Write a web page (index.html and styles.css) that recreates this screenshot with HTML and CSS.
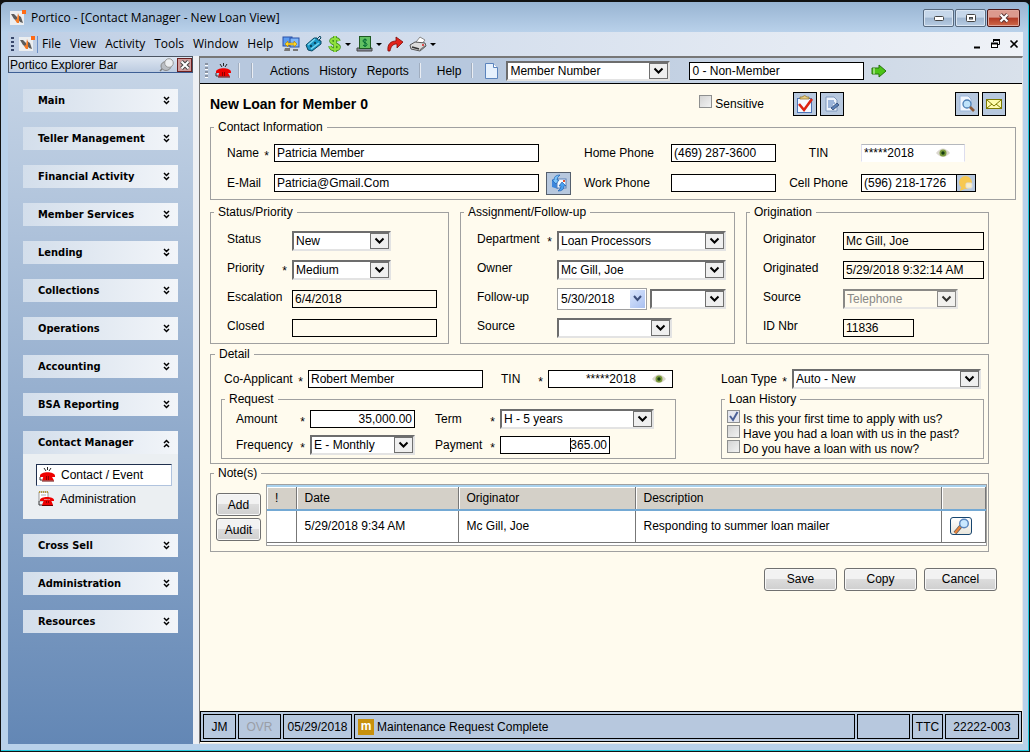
FILE: index.html
```html
<!DOCTYPE html>
<html lang="en">
<head>
    <meta charset="UTF-8">
    <meta name="viewport" content="width=device-width, initial-scale=1.0">
    <title>Portico - Contact Manager</title>
    <link rel="stylesheet" href="styles.css">
</head>
<body>
    <!-- Shared icons -->
    <svg class="defs" width="0" height="0" aria-hidden="true">
        <symbol id="logo" viewBox="0 0 16 16">
            <rect x="0" y="1" width="14" height="14" fill="#eceef0"/>
            <path d="M1 4l3 0 3 3v4l-3-2z" fill="#5c5c5c"/>
            <path d="M13 13l-3-1-2-3V5l3 2 1 3z" fill="#5c5c5c"/>
            <path d="M8 3l1 3 0 7-2 0-2-3 2-1z" fill="#f47a24"/>
            <rect x="12" y="0" width="4" height="4" fill="#ff6a13"/>
        </symbol>
        <symbol id="phone" viewBox="0 0 16 16">
            <path d="M5 1l2 3M8.500 0v3M12 1l-2 3" stroke="#222" fill="none"/>
            <path d="M1 9c0-5 15-5 15 0v1h-4V8.500H5V10H1z" fill="#ee0000"/>
            <path d="M5 8h7l3 5.500H3z" fill="#ee0000"/>
            <path d="M3 14h12" stroke="#600"/>
            <path d="M7 10h1M9 10h1M7 12h1M9 12h1" stroke="#300"/>
            <path d="M1 10v3h2" stroke="#333" fill="none"/>
        </symbol>
        <symbol id="eye" viewBox="0 0 14 10">
            <path d="M0 5q7-9 14 0q-7 8-14 0z" fill="#dcd8cf"/>
            <circle cx="7" cy="5" r="3.500" fill="#7a9b3c"/>
            <circle cx="7" cy="5" r="1.700" fill="#163d12"/>
        </symbol>
        <symbol id="down" viewBox="0 0 7 10">
            <path d="M1 1l2.500 2.500L6 1M1 5l2.500 2.500L6 5" fill="none" stroke="#000" stroke-width="1.500"/>
        </symbol>
    </svg>

    <div class="window">
        <header class="titlebar">
            <svg class="icon"><use href="#logo"/></svg>
            <span class="title">Portico - [Contact Manager - New Loan View]</span>
            <div class="window-buttons">
                <button aria-label="Minimize"><svg width="10" height="5"><rect x=".5" y=".5" width="9" height="4" rx="1" fill="#fff" stroke="#444"/></svg></button>
                <button aria-label="Restore"><svg width="10" height="8"><rect x=".5" y=".5" width="9" height="7" rx="1" fill="#fff" stroke="#444"/><rect x="3.500" y="3.500" width="3" height="1.500" fill="#9ab" stroke="#444"/></svg></button>
                <button class="close" aria-label="Close"><svg width="12" height="10"><path d="M2.500 1.500l7 7M9.500 1.500l-7 7" stroke="#533" stroke-width="4"/><path d="M2.500 1.500l7 7M9.500 1.500l-7 7" stroke="#fff" stroke-width="2.200"/></svg></button>
            </div>
        </header>

        <nav class="menubar">
            <span class="grip"></span>
            <svg class="icon"><use href="#logo"/></svg>
            <span class="menu-sep"></span>
            <button>File</button>
            <button>View</button>
            <button>Activity</button>
            <button>Tools</button>
            <button>Window</button>
            <button>Help</button>
            <div class="menu-tools">
                <button aria-label="Transfer"><svg width="18" height="16" viewBox="0 0 18 16"><rect x="1" y="1" width="9" height="9" fill="#5c9bf0" stroke="#2850a8"/><rect x="8" y="2" width="9" height="9" fill="#7fb6f8" stroke="#2850a8"/><path d="M3 12h5v3H2zM11 13h5v2h-5z" fill="#777"/><path d="M3 8l3-3v2h6V5l3 3-3 3V9H6v2z" fill="#ffd728" stroke="#a87a00" stroke-width=".6"/></svg></button>
                <button aria-label="Tag"><svg width="18" height="16" viewBox="0 0 18 16"><path d="M1 9l8-7 3 0 1 2 3 1 0 3-9 7-4-1z" fill="#1c96c4" stroke="#0b4862"/><path d="M3 9l7-6M6 13l8-6" stroke="#7ad8f2" stroke-width="1.500"/><circle cx="6" cy="10" r="1.200" fill="#0b4862"/><circle cx="10" cy="7" r="1.200" fill="#0b4862"/><path d="M12 3l3-3 1 2-2 2" fill="none" stroke="#0b4862"/></svg></button>
                <button class="drop" aria-label="Money"><svg width="14" height="16" viewBox="0 0 14 16"><path d="M11 5C10 2 3 2 3 5s8 3 8 6-8 4-9-1M7 0v16" fill="none" stroke="#3c8a1a" stroke-width="3.600"/><path d="M11 5C10 2 3 2 3 5s8 3 8 6-8 4-9-1M7 0v16" fill="none" stroke="#8fe03c" stroke-width="2.200"/></svg></button>
                <button class="drop" aria-label="Cash"><svg width="17" height="16" viewBox="0 0 17 16"><path d="M1 12h15v3H1z" fill="#889" stroke="#444"/><rect x="3.500" y=".5" width="11" height="12" fill="#62c062" stroke="#1e5a22"/><path d="M11 4.500C10 3 7 3 7 5s4 1.500 4 3.500-3 2-4 .5M9 2.500v8.500" fill="none" stroke="#063"/></svg></button>
                <button aria-label="Forward"><svg width="17" height="16" viewBox="0 0 17 16"><path d="M1 15C0 8 4 5 9 5V1l7 5-6 6V8C6 8 4 10 3 15z" fill="#e3231b" stroke="#7d0b07" stroke-width=".8"/></svg></button>
                <button class="drop" aria-label="Print"><svg width="18" height="16" viewBox="0 0 18 16"><path d="M7 6l4-5 5 3-4 5z" fill="#fff" stroke="#888"/><path d="M1 9l5-3 10 1 1 3-6 5-9-2z" fill="#dcdcdc" stroke="#555"/><path d="M3 11l7 2" stroke="#333" stroke-width="1.600"/><path d="M11 14l5-4" stroke="#777" stroke-width="1.500"/><circle cx="14" cy="9" r="1" fill="#d22"/></svg></button>
            </div>
            <div class="mdi-buttons">
                <button aria-label="Minimize child"><svg width="10" height="10"><path d="M1 8.500h6" stroke="#000" stroke-width="2"/></svg></button>
                <button aria-label="Restore child"><svg width="10" height="10"><path d="M2.500 3V1.500h6v4H7" fill="none" stroke="#000"/><path d="M2 1h7" stroke="#000" stroke-width="2"/><rect x=".5" y="4.500" width="6" height="4" fill="#fff" stroke="#000"/><path d="M0 4.500h7" stroke="#000" stroke-width="2"/></svg></button>
                <button aria-label="Close child"><svg width="10" height="10"><path d="M1.500 1.500l7 7M8.500 1.500l-7 7" stroke="#000" stroke-width="1.600"/></svg></button>
            </div>
        </nav>

        <div class="workspace">
            <aside class="explorer">
                <div class="explorer-head">
                    <span>Portico Explorer Bar</span>
                    <svg width="16" height="14" viewBox="0 0 16 14"><path d="M5 9l-4 4" stroke="#777" stroke-width="1.500"/><ellipse cx="7" cy="8" rx="5" ry="4.500" fill="#b9bdc3" stroke="#888"/><circle cx="10" cy="5" r="4.300" fill="#eceef0" stroke="#999"/></svg>
                    <button class="explorer-close" aria-label="Close explorer"><svg width="10" height="10"><path d="M1.500 1.500l7 7M8.500 1.500l-7 7" stroke="#444" stroke-width="4"/><path d="M1.500 1.500l7 7M8.500 1.500l-7 7" stroke="#fff" stroke-width="2"/></svg></button>
                </div>
                <div class="explorer-body">
                    <button class="group">Main<svg><use href="#down"/></svg></button>
                    <button class="group">Teller Management<svg><use href="#down"/></svg></button>
                    <button class="group">Financial Activity<svg><use href="#down"/></svg></button>
                    <button class="group">Member Services<svg><use href="#down"/></svg></button>
                    <button class="group">Lending<svg><use href="#down"/></svg></button>
                    <button class="group">Collections<svg><use href="#down"/></svg></button>
                    <button class="group">Operations<svg><use href="#down"/></svg></button>
                    <button class="group">Accounting<svg><use href="#down"/></svg></button>
                    <button class="group">BSA Reporting<svg><use href="#down"/></svg></button>
                    <div>
                        <button class="group open">Contact Manager<svg><use href="#down"/></svg></button>
                        <div class="group-items">
                            <a href="#" class="active"><svg class="icon"><use href="#phone"/></svg>Contact / Event</a>
                            <a href="#"><svg class="icon" viewBox="0 0 16 16"><path d="M1 1h9v9H1z" fill="#fff" stroke="#999"/><path d="M1 1h10" stroke="#b89a3a" stroke-width="2" stroke-dasharray="1 1"/><path d="M3 4h5" stroke="#aab"/><path d="M2 9c0-4 14-4 14 0v1h-4V8.500H6V10H2z" fill="#ee0000"/><path d="M6 9h7l2 5H4z" fill="#ee0000"/><path d="M4 14.500h11" stroke="#600"/><path d="M8 11h1M10 11h1" stroke="#300"/><path d="M1 10v4h3" stroke="#333" fill="none"/></svg>Administration</a>
                        </div>
                    </div>
                    <button class="group">Cross Sell<svg><use href="#down"/></svg></button>
                    <button class="group">Administration<svg><use href="#down"/></svg></button>
                    <button class="group">Resources<svg><use href="#down"/></svg></button>
                </div>
            </aside>

            <main class="main">
                <div class="toolbar">
                    <span class="grip light"></span>
                    <button class="tool-phone" aria-label="New contact"><svg class="icon"><use href="#phone"/></svg></button>
                    <span class="tool-sep"></span>
                    <span class="tool-sep"></span>
                    <div class="tool-menu">
                        <button>Actions</button>
                        <button>History</button>
                        <button>Reports</button>
                    </div>
                    <span class="tool-sep"></span>
                    <button class="tool-help">Help</button>
                    <span class="tool-sep"></span>
                    <button class="tool-page" aria-label="New"><svg width="13" height="16" viewBox="0 0 13 16"><path d="M.5.500h8l4 4v11H.5z" fill="#e6f1fd" stroke="#5b84bd"/><path d="M8.500.500v4h4" fill="#fff" stroke="#5b84bd"/></svg></button>
                    <select class="member-type" aria-label="Search by"><option>Member Number</option></select>
                    <input class="member-value" type="text" aria-label="Member" value="0 - Non-Member">
                    <button aria-label="Go"><svg width="16" height="14" viewBox="0 0 16 14"><path d="M1 4h7V1l7 6-7 6v-3H1z" fill="#4cc417" stroke="#26750b"/><path d="M3 4v6" stroke="#dff5d2"/></svg></button>
                </div>

                <form class="form">
                    <div class="form-head">
                        <h1>New Loan for Member 0</h1>
                        <label class="check"><input type="checkbox">Sensitive</label>
                        <div class="icon-buttons">
                            <button type="button" aria-label="Tasks"><svg width="20" height="20" viewBox="0 0 20 20"><rect x="2.500" y="4.500" width="14" height="14" fill="#f6f9ff" stroke="#4d74b8"/><path d="M5 5h9V3h-2q-2-3-5 0H5z" fill="#e8cf86" stroke="#8a6a1c" stroke-width=".7"/><path d="M4 10l5 6 8-11" fill="none" stroke="#dd2211" stroke-width="2.600"/></svg></button>
                            <button type="button" aria-label="Edit"><svg width="18" height="18" viewBox="0 0 18 18"><path d="M3 2h8l3 3v11H3z" fill="#eef4fc" stroke="#7f98bd"/><path d="M5 6h6M5 8h7M5 10h5M5 12h4" stroke="#4a76b8"/><path d="M8 13l6-5 2 2-6 5z" fill="#5a80b5" stroke="#223a66" stroke-width=".7"/></svg></button>
                        </div>
                        <div class="icon-buttons preview">
                            <button type="button" aria-label="Preview"><svg width="18" height="18" viewBox="0 0 18 18"><path d="M2 1h8l3 3v12H2z" fill="#f2f7fe" stroke="#9bb7dc"/><circle cx="9" cy="9" r="4" fill="#bfe3fa" stroke="#4d7fb5" stroke-width="1.300"/><path d="M12 12l4 4" stroke="#8a5a3a" stroke-width="2.600"/></svg></button>
                            <button type="button" aria-label="Mail"><svg width="16" height="12" viewBox="0 0 16 12"><rect x=".5" y="1.500" width="15" height="9" fill="#fffcae" stroke="#7d7a00"/><path d="M1 2l7 6 7-6M1 10l5-4M15 10l-5-4" fill="none" stroke="#7d7a00"/></svg></button>
                        </div>
                    </div>

                    <fieldset>
                        <legend>Contact Information</legend>
                        <div class="contact-grid">
                            <label for="name">Name<span class="star">*</span></label>
                            <input id="name" type="text" value="Patricia Member">
                            <span></span>
                            <label for="home">Home Phone</label>
                            <input id="home" type="text" value="(469) 287-3600">
                            <label class="centered" for="tin">TIN</label>
                            <div class="masked soft">
                                <input id="tin" type="text" value="*****2018">
                                <svg class="eye"><use href="#eye"/></svg>
                            </div>

                            <label for="email">E-Mail</label>
                            <input id="email" type="text" value="Patricia@Gmail.Com">
                            <button type="button" class="mail-button" aria-label="Send e-mail"><svg width="18" height="18" viewBox="0 0 18 18"><path d="M2 6l6-2v11l-6-2z" fill="#3c86dc"/><rect x="7" y="5" width="9" height="9" fill="#f7fbff" stroke="#5b7fb5"/><rect x="13" y="6" width="2" height="2" fill="#e0522c"/><path d="M10 1Q4 1 4 6H2l4 4 3-4H7q0-3 3-5z" fill="#7cc4fa" stroke="#1c5fb0" stroke-width=".7"/><path d="M8 17q6 0 6-5h2l-4-4-3 4h2q0 3-3 5z" fill="#4aa0f0" stroke="#1c5fb0" stroke-width=".7"/></svg></button>
                            <label for="work">Work Phone</label>
                            <input id="work" type="text">
                            <label class="centered" for="cell">Cell Phone</label>
                            <div class="cell-field">
                                <input id="cell" type="text" value="(596) 218-1726">
                                <button type="button" aria-label="Text message"><svg width="16" height="16" viewBox="0 0 16 16"><circle cx="7.500" cy="7.500" r="6.500" fill="#f7c850"/><path d="M3 12l-1 4 5-2z" fill="#f7c850"/><rect x="8" y="8" width="6" height="5" rx="1" fill="#fbeec4" stroke="#ddd"/></svg></button>
                            </div>
                        </div>
                    </fieldset>

                    <div class="sections">
                        <div class="trio">
                            <fieldset>
                                <legend>Status/Priority</legend>
                                <div class="rows status">
                                    <label for="status">Status</label>
                                    <select id="status"><option>New</option></select>
                                    <label for="priority">Priority<span class="star">*</span></label>
                                    <select id="priority"><option>Medium</option></select>
                                    <label for="escalation">Escalation</label>
                                    <input id="escalation" type="text" value="6/4/2018" readonly>
                                    <label for="closed">Closed</label>
                                    <input id="closed" type="text" readonly>
                                </div>
                            </fieldset>

                            <fieldset>
                                <legend>Assignment/Follow-up</legend>
                                <div class="rows assignment">
                                    <label for="department">Department<span class="star">*</span></label>
                                    <select id="department"><option>Loan Processors</option></select>
                                    <label for="owner">Owner</label>
                                    <select id="owner"><option>Mc Gill, Joe</option></select>
                                    <label for="followup">Follow-up</label>
                                    <div class="followup">
                                        <div class="date-field">
                                            <input id="followup" type="text" value="5/30/2018">
                                            <button type="button" aria-label="Pick date"><svg width="9" height="7"><path d="M1 1l3.500 4L8 1" fill="none" stroke="#3c4f7c" stroke-width="2"/></svg></button>
                                        </div>
                                        <select aria-label="Follow-up time"><option></option></select>
                                    </div>
                                    <label for="source">Source</label>
                                    <select id="source" class="source"><option></option></select>
                                </div>
                            </fieldset>

                            <fieldset>
                                <legend>Origination</legend>
                                <div class="rows origination">
                                    <label for="originator">Originator</label>
                                    <input id="originator" type="text" value="Mc Gill, Joe" readonly>
                                    <label for="originated">Originated</label>
                                    <input id="originated" type="text" value="5/29/2018 9:32:14 AM" readonly>
                                    <label for="origin-source">Source</label>
                                    <select id="origin-source" disabled><option>Telephone</option></select>
                                    <label for="id-nbr">ID Nbr</label>
                                    <input id="id-nbr" class="id-nbr" type="text" value="11836" readonly>
                                </div>
                            </fieldset>
                        </div>

                        <fieldset class="detail">
                            <legend>Detail</legend>
                            <div class="detail-grid">
                                <div class="applicant">
                                    <label for="coapplicant">Co-Applicant<span class="star">*</span></label>
                                    <input id="coapplicant" type="text" value="Robert Member">
                                    <label class="co-tin" for="co-tin">TIN<span class="star">*</span></label>
                                    <div class="masked">
                                        <input id="co-tin" class="right" type="text" value="*****2018">
                                        <svg class="eye"><use href="#eye"/></svg>
                                    </div>
                                </div>
                                <div class="loan-type">
                                    <label for="loan-type">Loan Type<span class="star">*</span></label>
                                    <select id="loan-type"><option>Auto - New</option></select>
                                </div>

                                <fieldset>
                                    <legend>Request</legend>
                                    <div class="request">
                                        <label for="amount">Amount<span class="star">*</span></label>
                                        <input id="amount" class="right" type="text" value="35,000.00">
                                        <label for="term">Term<span class="star">*</span></label>
                                        <select id="term"><option>H - 5 years</option></select>
                                        <label for="frequency">Frequency<span class="star">*</span></label>
                                        <select id="frequency"><option>E - Monthly</option></select>
                                        <label for="payment">Payment<span class="star">*</span></label>
                                        <div class="payment">
                                            <input id="payment" class="right" type="text" value="365.00">
                                            <span class="caret"></span>
                                        </div>
                                    </div>
                                </fieldset>

                                <fieldset>
                                    <legend>Loan History</legend>
                                    <div class="history">
                                        <label class="check"><input type="checkbox" checked>Is this your first time to apply with us?</label>
                                        <label class="check"><input type="checkbox">Have you had a loan with us in the past?</label>
                                        <label class="check"><input type="checkbox">Do you have a loan with us now?</label>
                                    </div>
                                </fieldset>
                            </div>
                        </fieldset>

                        <fieldset class="notes">
                            <legend>Note(s)</legend>
                            <div class="notes-body">
                                <div class="notes-buttons">
                                    <button type="button" class="btn">Add</button>
                                    <button type="button" class="btn">Audit</button>
                                </div>
                                <div class="table-frame">
                                    <table>
                                        <thead>
                                            <tr>
                                                <th class="flag">!</th>
                                                <th class="date">Date</th>
                                                <th class="originator">Originator</th>
                                                <th>Description</th>
                                                <th class="view"></th>
                                            </tr>
                                        </thead>
                                        <tbody>
                                            <tr>
                                                <td></td>
                                                <td>5/29/2018 9:34 AM</td>
                                                <td>Mc Gill, Joe</td>
                                                <td>Responding to summer loan mailer</td>
                                                <td><button type="button" class="view-button" aria-label="View note"><svg width="18" height="16" viewBox="0 0 18 16"><path d="M9 8l-6 7" stroke="#555" stroke-width="3.600"/><path d="M8.500 8.500L3 15" stroke="#e8843c" stroke-width="2.400"/><circle cx="12" cy="5.500" r="4.300" fill="#c9e8ff" stroke="#5b86bd" stroke-width="1.400"/></svg></button></td>
                                            </tr>
                                        </tbody>
                                    </table>
                                </div>
                            </div>
                        </fieldset>
                    </div>

                    <div class="form-actions">
                        <button type="button" class="btn">Save</button>
                        <button type="button" class="btn">Copy</button>
                        <button type="button" class="btn">Cancel</button>
                    </div>
                </form>

                <footer class="statusbar">
                    <span class="user">JM</span>
                    <span class="ovr">OVR</span>
                    <span class="today">05/29/2018</span>
                    <span class="message"><i>m</i>Maintenance Request Complete</span>
                    <span class="blank"></span>
                    <span class="ttc">TTC</span>
                    <span class="number">22222-003</span>
                </footer>
            </main>
        </div>
    </div>
</body>
</html>
```
FILE: styles.css
```css
* {
    box-sizing: border-box;
}

body {
    margin: 0;
    background: #111;
    color: #000;
    font: 12px/14px "Liberation Sans", Arial, sans-serif;
}

button, input, select {
    margin: 0;
    padding: 0;
    border-radius: 0;
    color: #000;
    font: inherit;
}

button {
    border: none;
    background: none;
}

svg {
    display: block;
    flex: none;
}

a {
    color: #000;
    text-decoration: none;
}

.defs {
    position: absolute;
}

.icon {
    width: 16px;
    height: 16px;
}

/* Window frame */
.window {
    display: flex;
    flex-direction: column;
    min-height: 100vh;
    padding: 0 6px 7px 7px;
    border: 1px solid #111;
    border-top-width: 2px;
    border-radius: 6px 6px 0 0;
    background: linear-gradient(#98b4d2, #b9d1ea 30px, #b9d1ea);
    box-shadow: inset -1px -1px 0 #22c8dc;
}

.titlebar {
    display: flex;
    align-items: center;
    height: 30px;
    padding: 2px 3px 0 2px;
}

.title {
    flex: 1;
    padding-left: 5px;
    font-family: "Open Sans", sans-serif;
    font-size: 12px;
}

.window-buttons {
    display: flex;
    gap: 1px;
}

.window-buttons button {
    display: flex;
    align-items: center;
    justify-content: center;
    width: 31px;
    height: 18px;
    border: 1px solid #57697e;
    border-radius: 2px;
    background: linear-gradient(#c6d7ea 45%, #9fb6d0 50%, #b7cce3);
    box-shadow: inset 0 0 0 1px #d9e5f2;
}

.window-buttons .close {
    width: 33px;
    border-color: #4d1a1a;
    background: linear-gradient(#dc9a8e 45%, #b23a25 50%, #cf6a4a);
    box-shadow: inset 0 0 0 1px #e0a59a;
}

/* Menu bar */
.menubar {
    display: flex;
    align-items: center;
    height: 24px;
    padding: 0 4px 0 3px;
    background: linear-gradient(to right, #bfcfe5, #eff2f7);
}

.menubar > button {
    margin-right: 9px;
    font-family: "Open Sans", sans-serif;
    font-size: 12px;
}

.grip {
    width: 3px;
    height: 15px;
    margin-right: 5px;
    background: repeating-linear-gradient(#39486b 0 2px, transparent 2px 4px);
}

.grip.light {
    background: repeating-linear-gradient(#8a94a4 0 2px, #fff 2px 3px, transparent 3px 4px);
}

.menu-sep {
    width: 1px;
    height: 17px;
    margin: 0 4px 0 2px;
    background: #6d90c6;
}

.menu-tools {
    display: flex;
    flex: 1;
    align-items: center;
    gap: 5px;
}

.menu-tools button {
    display: flex;
    align-items: center;
    gap: 3px;
}

.menu-tools .drop::after {
    content: "";
    border: 3px solid transparent;
    border-top-color: #000;
    border-bottom: none;
}

.mdi-buttons {
    display: flex;
    gap: 8px;
}

/* Explorer bar */
.workspace {
    display: flex;
    flex: 1;
    background: #eef0f3;
}

.explorer {
    display: flex;
    flex: none;
    flex-direction: column;
    width: 185px;
    margin-right: 6px;
}

.explorer-head {
    display: flex;
    align-items: center;
    height: 17px;
    padding-left: 1px;
    border: 1px solid #4b5563;
    border-bottom-color: #3e5f94;
    background: linear-gradient(#dde6f1, #bccbe0);
}

.explorer-head span {
    flex: 1;
}

.explorer-close {
    display: flex;
    align-items: center;
    justify-content: center;
    width: 15px;
    height: 14px;
    margin-left: 2px;
    border: 1px solid #6b1f1f;
    background: #cf9c9c;
}

.explorer-body {
    display: flex;
    flex: 1;
    flex-direction: column;
    gap: 15px;
    padding: 16px 15px;
    background: linear-gradient(#c5d4e6, #6387b5);
}

.group {
    display: flex;
    align-items: center;
    justify-content: space-between;
    width: 100%;
    height: 23px;
    padding: 0 8px 0 15px;
    background: linear-gradient(to right, #d3deeb, #f2f5f9);
    font-family: "DejaVu Sans Condensed", sans-serif;
    font-size: 11px;
    font-weight: bold;
}

.group svg {
    width: 7px;
    height: 10px;
}

.group.open svg {
    transform: scaleY(-1);
}

.group-items {
    padding: 10px 6px 8px 13px;
    background: #ebeff2;
}

.group-items a {
    display: flex;
    align-items: center;
    gap: 6px;
    height: 25px;
    padding-left: 2px;
}

.group-items .active {
    height: 22px;
    border: 1px solid #1f2f4d;
    border-right-color: #b0c3de;
    border-bottom-color: #b0c3de;
    background: #fff;
}

/* Main area */
.main {
    display: flex;
    flex: 1;
    flex-direction: column;
    min-width: 0;
    padding-bottom: 1px;
    border: 1px solid #777;
    border-top-width: 2px;
    border-right-color: #e8e8e8;
    border-bottom-color: #e8e8e8;
    background: #fffbee;
}

.toolbar {
    display: flex;
    align-items: center;
    height: 26px;
    padding-left: 5px;
    border-bottom: 1px solid #000;
    background: linear-gradient(to right, #b7c8de 35%, #d9e1eb);
}

.tool-phone {
    margin: 0 8px 0 2px;
}

.tool-sep {
    width: 1px;
    height: 15px;
    margin-right: 12px;
    background: #e9edf3;
    box-shadow: -1px 0 0 #a0adbf;
}

.tool-menu {
    display: flex;
    gap: 10px;
    margin: 0 11px 0 5px;
}

.tool-help {
    margin: 0 11px 0 4px;
}

.tool-page {
    margin-right: 8px;
}

.member-type {
    width: 164px;
    margin-right: 19px;
}

.member-value {
    margin-right: 7px;
}

/* Fields */
input[type="text"] {
    width: 100%;
    min-width: 0;
    height: 18px;
    padding: 0 2px;
    border: 1px solid #000;
    background: #fff;
}

.toolbar input[type="text"] {
    width: 175px;
}

input[type="text"]:read-only {
    background: transparent;
}

input.right {
    text-align: right;
}

select {
    appearance: none;
    height: 20px;
    padding: 0 20px 0 2px;
    border: 2px solid #6d6d6d;
    border-right-color: #e3e3e3;
    border-bottom-color: #e3e3e3;
    background: #fff url("data:image/svg+xml,%3Csvg xmlns='http://www.w3.org/2000/svg' width='19' height='16'%3E%3Crect x='.5' y='.5' width='18' height='15' fill='%23efefef' stroke='%23707070'/%3E%3Cpath d='M5.500 5.500l4 4 4-4' fill='none' stroke='%23000' stroke-width='2'/%3E%3C/svg%3E") no-repeat right center;
}

select:disabled {
    background-color: transparent;
    color: #6d6d6d;
    opacity: 0.8;
}

label {
    display: flex;
    justify-content: space-between;
    padding-right: 5px;
}

.star {
    height: 14px;
    padding-top: 3px;
}

.eye {
    width: 14px;
    height: 10px;
}

.check {
    align-items: flex-start;
    justify-content: flex-start;
    gap: 3px;
    padding: 0;
}

.check input {
    appearance: none;
    width: 13px;
    height: 13px;
    border: 1px solid #8e8f8f;
    background: linear-gradient(135deg, #d4d4d4, #f2f2f2);
}

.check input:checked {
    background: #e4e6ee url("data:image/svg+xml,%3Csvg xmlns='http://www.w3.org/2000/svg' width='11' height='11'%3E%3Cpath d='M2 5l3 4 4.500-8' fill='none' stroke='%234a5f97' stroke-width='2'/%3E%3C/svg%3E") center;
}

/* Form */
.form {
    flex: 1;
    padding: 0 6px 10px 10px;
}

.form-head {
    display: flex;
    align-items: center;
    height: 36px;
    padding: 4px 10px 0 0;
}

h1 {
    flex: 1;
    margin: 0;
    font-size: 14px;
    line-height: 16px;
}

.form-head .check {
    margin-right: 29px;
    line-height: 18px;
}

.icon-buttons {
    display: flex;
    gap: 3px;
}

.icon-buttons.preview {
    margin-left: 111px;
}

.icon-buttons button {
    display: flex;
    align-items: center;
    justify-content: center;
    width: 24px;
    height: 24px;
    border: 1px solid #000;
    background: #b7c8de;
}

fieldset {
    min-width: 0;
    margin: 0;
    padding: 0 3px;
    border: 1px solid #a0a0a0;
}

legend {
    padding: 0 4px;
}

.contact-grid {
    display: grid;
    grid-template-columns: 47px 1fr 45px 87px 105px 85px 151px;
    grid-auto-rows: 30px;
    align-items: center;
    padding: 4px 0 1px 13px;
}

.centered {
    justify-content: center;
    padding-right: 0;
}

.masked {
    display: flex;
    align-items: center;
    height: 18px;
    padding-right: 6px;
    border: 1px solid #000;
    background: #fff;
}

.masked input[type="text"] {
    flex: 1;
    height: 16px;
    margin-right: 14px;
    border: none;
    background: none;
}

.masked.soft {
    width: 104px;
    padding-right: 14px;
    border-color: #b5b8bd #dde #fff;
}

.masked.soft input[type="text"] {
    margin-right: 0;
}

.mail-button {
    display: flex;
    align-items: center;
    justify-content: center;
    width: 25px;
    height: 23px;
    margin-left: 7px;
    border: 1px solid #555f6d;
    background: #b7c8de;
}

.cell-field {
    display: flex;
    width: 115px;
}

.cell-field button {
    display: flex;
    align-items: center;
    justify-content: center;
    width: 19px;
    flex: none;
    border: 1px solid #000;
    border-left: none;
    background: #b7c8de;
}

.sections {
    margin-right: 27px;
}

.trio {
    display: grid;
    grid-template-columns: 239fr 275fr 243fr;
    gap: 11px;
    margin: 5px 0 3px;
}

.rows {
    display: grid;
    grid-auto-rows: 29px;
    align-items: center;
    padding: 7px 8px 1px 13px;
}

.rows label {
    padding-bottom: 4px;
}

.status {
    grid-template-columns: 65px 1fr;
}

.status select {
    width: 99px;
}

.assignment {
    grid-template-columns: 80px 1fr;
    padding-right: 5px;
}

.followup {
    display: flex;
    align-items: center;
    gap: 3px;
}

.followup select {
    flex: 1;
}

.date-field {
    display: flex;
    width: 90px;
    height: 22px;
    padding: 1px;
    border: 1px solid #a0a0a0;
    background: #fff;
}

.date-field input[type="text"] {
    border: none;
}

.date-field button {
    display: flex;
    flex: none;
    align-items: center;
    justify-content: center;
    width: 15px;
    background: linear-gradient(135deg, #dbe7fd, #a9c0f0);
}

.assignment .source {
    width: 115px;
}

.origination {
    grid-template-columns: 80px 1fr;
    padding-right: 1px;
}

.origination select {
    width: 115px;
}

input.id-nbr[type="text"] {
    width: 71px;
}

.detail {
    padding: 0 4px 4px;
}

.detail-grid {
    display: grid;
    grid-template-columns: 455fr 263fr;
    column-gap: 45px;
    padding: 5px 0 0 6px;
}

.applicant {
    display: grid;
    grid-template-columns: 84px 1fr 65px 125px;
    align-items: center;
    height: 26px;
    padding: 0 3px;
}

.co-tin {
    padding-left: 18px;
}

.loan-type {
    display: grid;
    grid-template-columns: 71px 1fr;
    align-items: center;
    height: 26px;
    padding-right: 3px;
}

.request {
    display: grid;
    grid-template-columns: 74px 105px 85px 1fr;
    grid-auto-rows: 26px;
    align-items: center;
    padding: 0 18px 0 11px;
}

.request label:nth-of-type(even) {
    padding-left: 20px;
}

.payment {
    position: relative;
    width: 110px;
}

.caret {
    position: absolute;
    top: 2px;
    right: 39px;
    width: 1px;
    height: 14px;
    background: #000;
}

.history {
    display: grid;
    grid-auto-rows: 15px;
    padding: 4px 0 0 2px;
}

.history .check {
    line-height: 18px;
}

/* Notes */
.notes {
    margin-top: 2px;
    padding: 0 1px 5px 3px;
}

.notes-body {
    display: flex;
    gap: 5px;
    padding: 4px 0 0 2px;
}

.notes-buttons {
    display: flex;
    flex-direction: column;
    gap: 2px;
    width: 45px;
    padding-top: 9px;
}

.btn {
    height: 23px;
    border: 1px solid #707070;
    border-radius: 3px;
    background: linear-gradient(#f2f2f2 45%, #dcdcdc 50%, #cfcfcf);
    box-shadow: inset 0 0 0 1px #f8f8f8;
}

.table-frame {
    flex: 1;
    padding-bottom: 2px;
    border: 1px solid #a0a0a0;
    background: #fff;
}

table {
    width: 100%;
    border-collapse: collapse;
    table-layout: fixed;
}

th {
    height: 24px;
    padding: 0 8px;
    border-top: 2px solid #a9d2ee;
    border-bottom: 2px solid #74a9d4;
    border-right: 1px solid #777;
    background: #d4d0c8;
    box-shadow: inset 1px 1px 0 #fff;
    font-weight: normal;
    text-align: left;
}

td {
    height: 32px;
    padding: 0 8px;
    border-right: 1px solid #777;
    border-bottom: 1px solid #777;
}

.flag {
    width: 29px;
}

.date {
    width: 162px;
}

.originator {
    width: 177px;
}

.view {
    width: 44px;
}

.view-button {
    display: flex;
    align-items: center;
    justify-content: center;
    width: 22px;
    height: 18px;
    border: 1px solid #17456f;
    border-radius: 3px;
    background: linear-gradient(#fff, #e9e6dc);
}

.form-actions {
    display: flex;
    justify-content: flex-end;
    gap: 7px;
    margin: 16px 19px 0 0;
}

.form-actions .btn {
    width: 73px;
}

/* Status bar */
.statusbar {
    display: flex;
    gap: 2px;
    padding: 2px;
    border: 1px solid #000;
    background: #b7c8de;
}

.statusbar span {
    display: flex;
    align-items: center;
    justify-content: center;
    height: 25px;
    border: 1px solid #000;
}

.user {
    width: 33px;
}

.statusbar .ovr {
    width: 43px;
    color: #9a9ea6;
}

.today {
    width: 69px;
}

.statusbar .message {
    flex: 1;
    justify-content: flex-start;
    gap: 3px;
    padding-left: 3px;
}

.message i {
    width: 16px;
    height: 16px;
    background: #c8910c;
    color: #fff;
    font-style: normal;
    font-weight: bold;
    text-align: center;
}

.blank {
    width: 53px;
}

.ttc {
    width: 31px;
}

.number {
    width: 74px;
}
```
